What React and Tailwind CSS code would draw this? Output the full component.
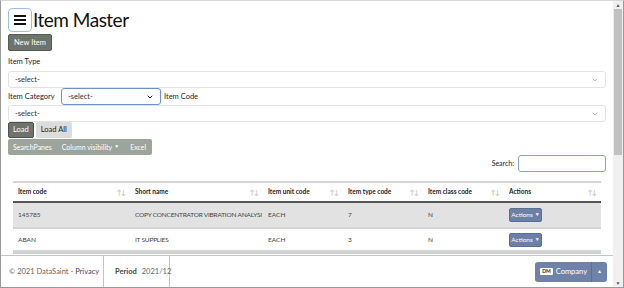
import { ChevronDown } from "lucide-react";

const rows = [
  { code: "145785", name: "COPY CONCENTRATOR VIBRATION ANALYSI", unit: "EACH", type: "7", cls: "N", bg: "bg-[#e2e2e2]", h: "h-[26px]" },
  { code: "ABAN", name: "IT SUPPLIES", unit: "EACH", type: "3", cls: "N", bg: "bg-white", h: "h-[23px]" },
];

const cols = [
  { label: "Item code", w: "w-[117px]" },
  { label: "Short name", w: "w-[133px]" },
  { label: "Item unit code", w: "w-[80px]" },
  { label: "Item type code", w: "w-[80px]" },
  { label: "Item class code", w: "w-[81px]" },
  { label: "Actions", w: "flex-1" },
];

function SortIcon() {
  return <span className="text-[7px] text-[#c8c8c8] tracking-[-1px]">↑↓</span>;
}

function Select({ className = "", focus }) {
  return (
    <div
      className={`h-[17px] shrink-0 flex items-center justify-between px-[6px] rounded-[3px] border ${
        focus ? "border-[#6f8fc9]" : "border-[#e3e3e3]"
      } bg-white ${className}`}
    >
      <span className="text-[7.5px] text-[#333]">-select-</span>
      <ChevronDown size={8} strokeWidth={focus ? 3 : 2} className={focus ? "text-[#222]" : "text-[#999]"} />
    </div>
  );
}

function ActionsBtn() {
  return (
    <div className="h-[14px] w-[33px] rounded-[2px] bg-[#6c80a6] border border-[#5b6f96] text-white text-[6.5px] flex items-center justify-center gap-[2px]">
      Actions <span className="text-[5px]">▼</span>
    </div>
  );
}

export default function App() {
  return (
    <div className="w-[624px] h-[288px] overflow-hidden flex border border-[#9a9a9a] border-t-[#d8d8d8] bg-white font-['Lato',sans-serif] text-[#212529]">
      <div className="flex-1 flex flex-col min-w-0">
        {/* page body */}
        <div className="flex-1 flex flex-col px-[7px] pt-[7px] overflow-hidden">
          <div className="flex items-center gap-[1px] h-[24px] shrink-0">
            <div className="w-[24px] h-[24px] rounded-[4px] border border-[#9ec0ee] flex flex-col items-center justify-center gap-[2px]">
              <span className="block w-[12px] h-[2px] bg-[#111]" />
              <span className="block w-[12px] h-[2px] bg-[#111]" />
              <span className="block w-[12px] h-[2px] bg-[#111]" />
            </div>
            <h1 className="text-[19px] leading-[24px] tracking-[-0.5px] text-[#111]">Item Master</h1>
          </div>

          <div className="mt-[2px] h-[17px] w-fit px-[5px] flex items-center rounded-[2px] bg-[#6e736c] border border-[#555a54] text-white text-[7.5px]">
            New Item
          </div>

          <div className="mt-[4px] h-[14px] flex items-center text-[7.5px]">Item Type</div>
          <Select className="mt-[2px]" />

          <div className="flex items-center h-[17px] shrink-0">
            <span className="text-[7.5px] w-[53px]">Item Category</span>
            <Select focus className="w-[100px]" />
            <span className="text-[7.5px] ml-[3px]">Item Code</span>
          </div>
          <Select />

          <div className="flex gap-[2px] h-[16px] shrink-0">
            <div className="h-[16px] px-[4px] flex items-center rounded-[2px] bg-[#6e736c] border border-[#4d514b] text-white text-[7.5px]">Load</div>
            <div className="h-[16px] px-[5px] flex items-center rounded-[2px] bg-[#dcdcdc] text-[#222] text-[7.5px]">Load All</div>
          </div>

          <div className="flex w-fit h-[16px] shrink-0 mt-[1px] rounded-[2px] bg-[#9da49b] text-white text-[7px] items-center">
            <span className="px-[5px]">SearchPanes</span>
            <span className="px-[5px] flex items-center gap-[2px]">
              Column visibility <span className="text-[5px]">▼</span>
            </span>
            <span className="px-[6px]">Excel</span>
          </div>

          <div className="flex justify-end items-center gap-[4px] h-[17px] shrink-0">
            <span className="text-[7px]">Search:</span>
            <div className="w-[88px] h-[17px] rounded-[3px] border border-[#8aa2cf]" />
          </div>

          {/* table */}
          <div className="mx-[5px] mt-[9px] border-t-2 border-[#d4d4d4] shrink-0">
            <div className="flex h-[20px] items-center border-b-2 border-[#555] font-bold text-[6.5px]">
              {cols.map((c) => (
                <div key={c.label} className={`${c.w} px-[5px] flex justify-between items-center`}>
                  <span>{c.label}</span>
                  <SortIcon />
                </div>
              ))}
            </div>
            {rows.map((r) => (
              <div key={r.code} className={`flex ${r.h} items-center border-b-2 border-[#d4d4d4] text-[6.5px] text-[#444] ${r.bg}`}>
                <div className="w-[117px] px-[5px]">{r.code}</div>
                <div className="w-[133px] pl-[5px] whitespace-nowrap tracking-[-0.2px]">{r.name}</div>
                <div className="w-[80px] px-[5px]">{r.unit}</div>
                <div className="w-[80px] px-[5px]">{r.type}</div>
                <div className="w-[81px] px-[5px]">{r.cls}</div>
                <div className="flex-1 px-[5px]">
                  <ActionsBtn />
                </div>
              </div>
            ))}
            <div className="h-[2px] bg-[#cfcfcf]" />
          </div>
        </div>

        {/* footer */}
        <div className="h-[32px] shrink-0 flex items-center border-t border-[#b7c6de] text-[7.5px] text-[#666]">
          <div className="w-[103px] h-full flex items-center pl-[8px] border-r border-[#b7c6de] whitespace-nowrap">
            © 2021 DataSaint - <span className="text-[#3d3f6b] ml-[2px]">Privacy</span>
          </div>
          <div className="w-[66px] h-full flex items-center pl-[11px] gap-[5px] border-r border-[#b7c6de] whitespace-nowrap">
            <span className="font-bold text-[#444]">Period</span>
            <span>2021/12</span>
          </div>
          <div className="ml-auto mr-[6px] flex h-[20px] rounded-[3px] bg-[#6f83a8] text-white">
            <div className="flex items-center gap-[3px] pl-[5px] pr-[4px] border-r border-[#5d709a]">
              <span className="bg-white text-[#222] font-bold text-[5px] px-[2px] leading-[7px] rounded-[1px]">DM</span>
              <span className="text-[7.5px]">Company</span>
            </div>
            <div className="w-[15px] flex items-center justify-center text-[5px]">▲</div>
          </div>
        </div>
      </div>

      {/* scrollbar */}
      <div className="w-[10px] shrink-0 bg-[#f0f0f0] flex flex-col items-center">
        <div className="h-[8px] text-[5px] text-[#555] leading-[8px]">▲</div>
        <div className="w-[8px] h-[146px] bg-[#c1c1c1]" />
        <div className="flex-1" />
        <div className="h-[8px] text-[5px] text-[#555] leading-[8px]">▼</div>
      </div>
    </div>
  );
}
